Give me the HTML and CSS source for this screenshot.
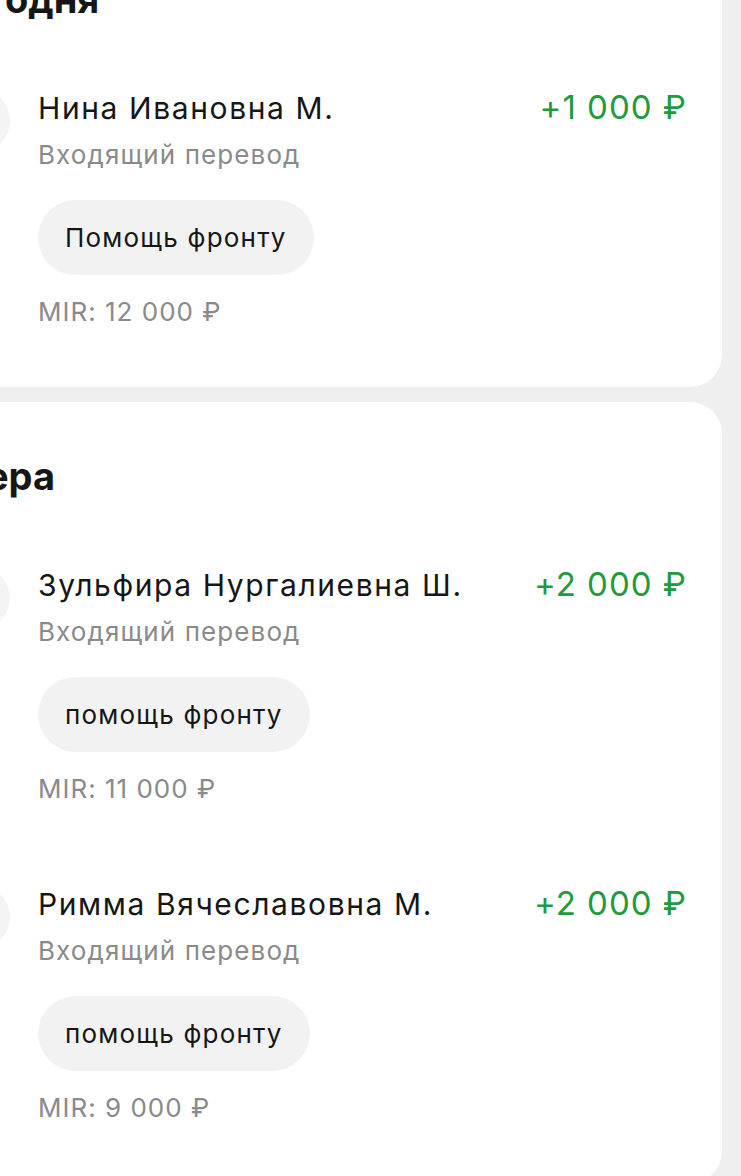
FILE: index.html
```html
<!DOCTYPE html>
<html lang="ru">

<head>
  <meta charset="UTF-8">
  <meta name="viewport" content="width=device-width, initial-scale=1.0">
  <title>История операций</title>
  <link rel="stylesheet" href="styles.css">
</head>

<body>
  <main class="feed">
    <section class="day">
      <h2 class="day-title">Сегодня</h2>
      <div class="ops">
        <article class="op">
          <div class="avatar"></div>
          <div class="op-body">
            <div class="op-top">
              <span class="op-name">Нина Ивановна М.</span>
              <span class="op-sum">+1&nbsp;000&nbsp;₽</span>
            </div>
            <p class="op-type">Входящий перевод</p>
            <span class="chip">Помощь фронту</span>
            <p class="op-card">MIR: 12&nbsp;000&nbsp;₽</p>
          </div>
        </article>
      </div>
    </section>

    <section class="day">
      <h2 class="day-title">Вчера</h2>
      <div class="ops">
        <article class="op">
          <div class="avatar"></div>
          <div class="op-body">
            <div class="op-top">
              <span class="op-name">Зульфира Нургалиевна Ш.</span>
              <span class="op-sum">+2&nbsp;000&nbsp;₽</span>
            </div>
            <p class="op-type">Входящий перевод</p>
            <span class="chip">помощь фронту</span>
            <p class="op-card">MIR: 11&nbsp;000&nbsp;₽</p>
          </div>
        </article>

        <article class="op">
          <div class="avatar"></div>
          <div class="op-body">
            <div class="op-top">
              <span class="op-name">Римма Вячеславовна М.</span>
              <span class="op-sum">+2&nbsp;000&nbsp;₽</span>
            </div>
            <p class="op-type">Входящий перевод</p>
            <span class="chip">помощь фронту</span>
            <p class="op-card">MIR: 9&nbsp;000&nbsp;₽</p>
          </div>
        </article>
      </div>
    </section>
  </main>
</body>

</html>
```

FILE: styles.css
```css
:root {
  --page-bg: #efefef;
  --card-bg: #ffffff;
  --text: #161616;
  --muted: #8a8a8a;
  --chip-bg: #f2f2f2;
  --green: #1f9a3c;
}

body {
  font-family: Inter, "Open Sans", Arial, sans-serif;
  background-color: var(--page-bg);
  color: var(--text);
  margin: 0;
  padding: 0;
  overflow: hidden;
}

.feed {
  display: flex;
  flex-direction: column;
  gap: 15px;
  margin: -75px 19px 0 -80px;
}

.day {
  background: var(--card-bg);
  border-radius: 32px;
  padding: 54px 35px 59px 26px;
}

.day-title {
  margin: 0 0 70px -8px;
  font-size: 38px;
  line-height: 40px;
  font-weight: 700;
}

.ops {
  display: flex;
  flex-direction: column;
  gap: 80px;
}

.op {
  display: flex;
  align-items: flex-start;
  gap: 28px;
}

.avatar {
  flex: none;
  width: 64px;
  height: 64px;
  border-radius: 50%;
  background: #f4f4f4;
}

.op-body {
  flex: 1;
  display: flex;
  flex-direction: column;
  align-items: flex-start;
}

.op-top {
  align-self: stretch;
  display: flex;
  justify-content: space-between;
  align-items: baseline;
  gap: 20px;
}

.op-name {
  font-size: 30px;
  line-height: 36px;
  letter-spacing: 1.6px;
}

.op-sum {
  font-size: 33px;
  line-height: 36px;
  letter-spacing: 1px;
  color: var(--green);
  white-space: nowrap;
}

.op-type {
  margin: 13px 0 0;
  font-size: 26px;
  line-height: 32px;
  letter-spacing: 1.1px;
  color: var(--muted);
}

.chip {
  margin-top: 29px;
  padding: 0 27px;
  height: 75px;
  display: flex;
  align-items: center;
  border-radius: 38px;
  background: var(--chip-bg);
  font-size: 26px;
  letter-spacing: 1.2px;
}

.op-card {
  margin: 21px 0 0;
  font-size: 26px;
  line-height: 32px;
  letter-spacing: 1px;
  color: var(--muted);
}
```
